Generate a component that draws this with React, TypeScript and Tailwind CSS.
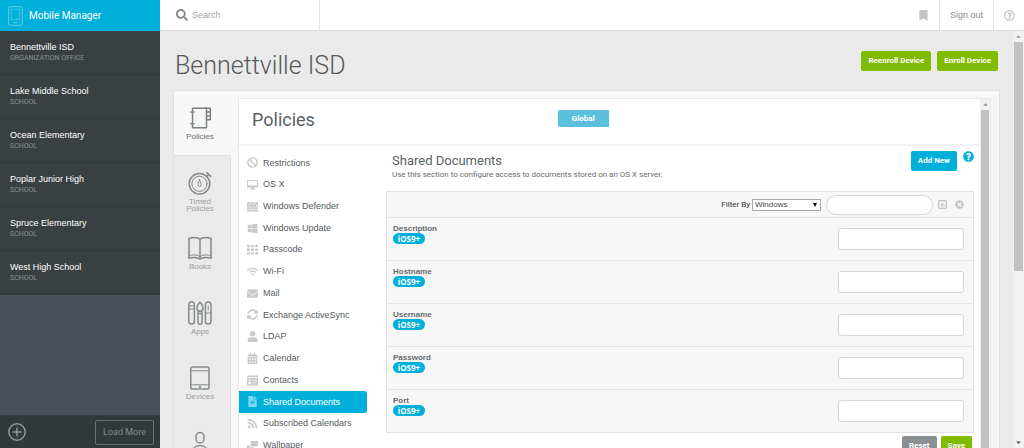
import React from 'react';
import {
  FaSearch,
  FaBookmark,
  FaBan,
  FaWindows,
  FaWifi,
  FaEnvelope,
  FaUser,
  FaFileAlt,
  FaRss,
  FaQuestionCircle,
  FaRegQuestionCircle,
  FaTimesCircle,
  FaSyncAlt,
  FaCalendarAlt,
} from 'react-icons/fa';

interface Organization {
  name: string;
  type: string;
}

interface NavItem {
  label: string;
  icon: React.ReactNode;
}

const organizations: Organization[] = [
  { name: 'Bennettville ISD', type: 'ORGANIZATION OFFICE' },
  { name: 'Lake Middle School', type: 'SCHOOL' },
  { name: 'Ocean Elementary', type: 'SCHOOL' },
  { name: 'Poplar Junior High', type: 'SCHOOL' },
  { name: 'Spruce Elementary', type: 'SCHOOL' },
  { name: 'West High School', type: 'SCHOOL' },
];

const fields = ['Description', 'Hostname', 'Username', 'Password', 'Port'];

const LineIcon: React.FC<{ children: React.ReactNode }> = ({ children }) => (
  <svg
    viewBox="0 0 24 24"
    className="size-6 shrink-0"
    fill="none"
    stroke="currentColor"
    strokeWidth="1.5"
    strokeLinejoin="round"
    strokeLinecap="round"
    aria-hidden="true"
  >
    {children}
  </svg>
);

const GlyphIcon: React.FC<{ children: React.ReactNode }> = ({ children }) => (
  <svg viewBox="0 0 12 12" className="size-[11px]" fill="currentColor" aria-hidden="true">
    {children}
  </svg>
);

const tabs: NavItem[] = [
  {
    label: 'Policies',
    icon: (
      <LineIcon>
        <path d="M4.500 2.200h14v19.600h-14z" />
        <path d="M17 2.200h5.300v11.500h-3.800M18.500 6h3.800M18.500 9.900h3.800" />
        <path d="M2.800 6h3.200M2.800 17.800h3.200" />
      </LineIcon>
    ),
  },
  {
    label: 'Timed Policies',
    icon: (
      <LineIcon>
        <circle cx="11.5" cy="12.8" r="10.3" />
        <circle cx="11.5" cy="12.8" r="7.6" strokeWidth="1" />
        <path d="M11.5 8.6c-.6 2-1.6 3.4-1.6 5a1.6 1.9 0 0 0 3.2 0c0-1.600-1-3-1.600-5z" strokeWidth="1" />
        <path d="M18.800 5.400l2-2M18.800 1.600l4 3.800" />
      </LineIcon>
    ),
  },
  {
    label: 'Books',
    icon: (
      <LineIcon>
        <path d="M12 3.200C9.500 1 4 1 1 2.200v20c3-1 8.500-1 11 .800 2.500-1.800 8-1.800 11-.800v-20C20 1 14.500 1 12 3.200z" />
        <path d="M12 3.200V23" />
        <path d="M1 19.600c3-1 8.500-1 11 .8 2.500-1.800 8-1.800 11-.8" strokeWidth="1" />
      </LineIcon>
    ),
  },
  {
    label: 'Apps',
    icon: (
      <LineIcon>
        <rect x="0.800" y="1" width="5.600" height="22" rx="2.800" />
        <path d="M1 5h5.200M1 8h5.200" strokeWidth="1" />
        <rect x="17.400" y="1" width="5.600" height="22" rx="2.800" />
        <path d="M17.600 12h5.200M20.200 5v4" strokeWidth="1" />
        <path d="M12 1c-1.600 2-3 3.600-3 6a3 3.200 0 0 0 6 0c0-2.400-1.400-4-3-6z" />
        <path d="M10 10.500v10.700a2 2 0 0 0 4 0V10.500M10 12.500h4" />
      </LineIcon>
    ),
  },
  {
    label: 'Devices',
    icon: (
      <LineIcon>
        <rect x="2.800" y="1" width="18.200" height="22" rx="1.800" />
        <path d="M2.800 4.800H21M2.800 18.800H21" strokeWidth="1" />
        <circle cx="12" cy="20.900" r=".4" />
      </LineIcon>
    ),
  },
  {
    label: 'Users',
    icon: (
      <LineIcon>
        <rect x="8" y="1.600" width="8" height="10.400" rx="4" />
        <path d="M4 23c0-5 3-8.400 8-8.400s8 3.400 8 8.400" />
      </LineIcon>
    ),
  },
];

const sections: NavItem[] = [
  { label: 'Restrictions', icon: <FaBan /> },
  {
    label: 'OS X',
    icon: (
      <GlyphIcon>
        <path fillRule="evenodd" d="M0 1h12v8.200H7.500v1.300H9v1H3v-1h1.500V9.200H0zM1.200 2.200v4.800h9.600V2.200z" />
      </GlyphIcon>
    ),
  },
  {
    label: 'Windows Defender',
    icon: (
      <GlyphIcon>
        <path d="M0 1.300h3.700v2.400H0zM4.200 1.300h3.700v2.400H4.200zM8.400 1.300H12v2.400H8.400zM0 4.100h1.900v2.400H0zM2.400 4.100h3.700v2.400H2.400zM6.600 4.100h3.700v2.400H6.600zM10.800 4.100H12v2.400h-1.200zM0 6.900h3.700v2.200H0zM4.200 6.900h3.700v2.200H4.200zM8.400 6.900H12v2.200H8.400zM0 9.500h5.700v2H0zM6.200 9.500H12v2H6.200z" />
      </GlyphIcon>
    ),
  },
  { label: 'Windows Update', icon: <FaWindows /> },
  {
    label: 'Passcode',
    icon: (
      <GlyphIcon>
        <path d="M0 1h3v2.500H0zM4.500 1h3v2.500h-3zM9 1h3v2.500H9zM0 5h3v2.500H0zM4.500 5h3v2.500h-3zM9 5h3v2.500H9zM0 9h3v2.500H0zM4.500 9h3v2.500h-3zM9 9h3v2.500H9z" />
      </GlyphIcon>
    ),
  },
  { label: 'Wi-Fi', icon: <FaWifi /> },
  { label: 'Mail', icon: <FaEnvelope /> },
  { label: 'Exchange ActiveSync', icon: <FaSyncAlt /> },
  { label: 'LDAP', icon: <FaUser /> },
  { label: 'Calendar', icon: <FaCalendarAlt /> },
  {
    label: 'Contacts',
    icon: (
      <GlyphIcon>
        <path
          fillRule="evenodd"
          d="M1 .5h11v2H0v-1zM0 3.200h12v8.300H0zM2 5v1.500h2V5zM1.500 7.300V10h3V7.300zM6.500 5v1h1.500V5zM9 5v1h1.800V5zM6.500 7v1h1.500V7zM9 7v1h1.800V7zM6.500 9v1h1.500V9z"
        />
      </GlyphIcon>
    ),
  },
  { label: 'Shared Documents', icon: <FaFileAlt /> },
  { label: 'Subscribed Calendars', icon: <FaRss /> },
  {
    label: 'Wallpaper',
    icon: (
      <GlyphIcon>
        <path d="M4 1h8v6H4zM0 6h3.200v2H7v3H0z" />
      </GlyphIcon>
    ),
  },
];

const Sidebar: React.FC = () => (
  <aside className="flex w-40 shrink-0 flex-col bg-[#495057]">
    <div className="flex h-[31px] shrink-0 items-center gap-[6px] bg-[#00b0db] px-2 text-white">
      <svg viewBox="0 0 15 20" className="h-5 w-[15px]" fill="none" stroke="#5bcdea" aria-hidden="true">
        <rect x="0.700" y="0.700" width="13.600" height="18.600" rx="1.500" />
        <rect x="3.200" y="3.200" width="8.600" height="10.600" strokeWidth=".6" />
        <path d="M5.500 16.700h4" />
      </svg>
      <span className="font-[Roboto] text-[10px]">Mobile Manager</span>
    </div>
    <ul>
      {organizations.map((org) => (
        <li key={org.name} className="border-b border-[#33393b] bg-[#3a4042]">
          <a href="#" className="flex h-[43px] flex-col justify-center gap-[2px] px-[10px]">
            <span className="text-[9px] leading-[10px] text-white">{org.name}</span>
            <span className="font-[Roboto] text-[7px] leading-[9px] text-[#8d9293]">{org.type}</span>
          </a>
        </li>
      ))}
    </ul>
    <div className="mt-auto flex h-[33px] shrink-0 items-center justify-between border-t border-[#3c4346] bg-[#33393b] pr-[6px] pl-2 text-[#92979a]">
      <button aria-label="Add">
        <svg viewBox="0 0 18 18" className="size-[18px]" fill="none" stroke="currentColor" strokeWidth="1.400">
          <circle cx="9" cy="9" r="8.200" />
          <path d="M9 4.500v9M4.500 9h9" />
        </svg>
      </button>
      <button className="h-[25px] rounded-[2px] border border-[#6b7072] px-[7px] pt-[2px] font-[Roboto] text-[9px] text-[#84898b]">
        Load More
      </button>
    </div>
  </aside>
);

const TopBar: React.FC = () => (
  <header className="flex h-[31px] shrink-0 items-stretch border-b border-[#d9d9d9] bg-white text-[9px] text-[#8c8c8c]">
    <label className="flex w-40 items-center gap-1 border-r border-[#e2e2e2] pl-4">
      <FaSearch className="size-3 shrink-0 text-[#8a8a8a]" />
      <input
        type="search"
        aria-label="Search"
        placeholder="Search"
        className="w-full min-w-0 pt-[2px] outline-none placeholder:text-[#a5a5a5]"
      />
    </label>
    <button aria-label="Bookmarks" className="ml-auto px-[11px] text-[#c4c4c4]">
      <FaBookmark className="h-[11px] w-[9px]" />
    </button>
    <a href="#" className="flex items-center border-x border-[#e2e2e2] px-[10px] pt-[2px]">
      Sign out
    </a>
    <a href="#" aria-label="Help" className="flex w-[30px] items-center justify-center text-[#bcbcbc]">
      <FaRegQuestionCircle className="size-[11px]" />
    </a>
  </header>
);

const TabStrip: React.FC = () => (
  <nav className="w-[57px] shrink-0">
    {tabs.map((tab, index) => (
      <a
        key={tab.label}
        href="#"
        className={
          index === 0
            ? 'flex h-[65px] flex-col items-center gap-[3px] border-b border-[#dedede] pt-[15px] pr-[5px] text-[#7d8283]'
            : 'flex h-[65px] flex-col items-center gap-[3px] border-r border-[#dedede] bg-[#eaeaea] pt-[15px] pr-[4px] text-[#858a8b]'
        }
      >
        {tab.icon}
        <span
          className={
            index === 0
              ? 'w-10 text-center text-[8px] leading-[7px] text-[#6c7173]'
              : 'w-10 text-center text-[8px] leading-[7px] text-[#9a9fa0]'
          }
        >
          {tab.label}
        </span>
      </a>
    ))}
  </nav>
);

const SectionNav: React.FC = () => (
  <nav className="mt-[6px] flex h-[304px] w-32 shrink-0 flex-col text-[9px]">
    {sections.map((section) => {
      const active = section.label === 'Shared Documents';
      return (
        <a
          key={section.label}
          href="#"
          className={
            active
              ? 'flex flex-1 items-center gap-[5px] rounded-r-[3px] bg-[#00b0db] pl-2 text-white'
              : 'flex flex-1 items-center gap-[5px] pl-2 text-[#555a5d]'
          }
        >
          <span
            className={
              active
                ? 'flex w-[11px] shrink-0 justify-center text-[11px] text-[#7fdcf3]'
                : 'flex w-[11px] shrink-0 justify-center text-[11px] text-[#c8c8c8]'
            }
          >
            {section.icon}
          </span>
          <span className="pt-px">{section.label}</span>
        </a>
      );
    })}
  </nav>
);

const FieldRow: React.FC<{ label: string }> = ({ label }) => (
  <div className="flex h-[43px] items-start justify-between border-b border-[#e2e2e2] pr-[9px] pl-[6px]">
    <label htmlFor={label} className="pt-[6px] text-[8px] leading-[9px] font-bold text-[#666b6e]">
      {label}
      <span className="block w-8 rounded-full bg-[#00b0db] text-center font-['Open_Sans'] text-[8px] leading-[11px] text-white">
        iOS9+
      </span>
    </label>
    <input
      id={label}
      type="text"
      className="mt-[10px] h-[22px] w-[126px] rounded-[3px] border border-[#d6d6d6] bg-white px-2 text-[9px]"
    />
  </div>
);

const SharedDocuments: React.FC = () => (
  <section className="ml-[19px] min-w-0 flex-1 pr-[6px]">
    <div className="flex h-[45px] items-start justify-between pt-[5px] pl-[6px]">
      <div className="pt-[2px]">
        <h3 className="font-[Roboto] text-[13px] leading-[15px] text-[#5a5f62]">Shared Documents</h3>
        <p className="pt-[2px] font-[Roboto] text-[8px] leading-[9px] text-[#666b6e]">
          Use this section to configure access to documents stored on an OS X server.
        </p>
      </div>
      <div className="flex items-start gap-[6px]">
        <button className="h-5 rounded-[2px] bg-[#00b0db] px-[7px] font-[Roboto] text-[8px] font-bold text-white">
          Add New
        </button>
        <button aria-label="Help" className="text-[#00b0db]">
          <FaQuestionCircle className="size-[11px]" />
        </button>
      </div>
    </div>
    <div className="border-x border-t border-[#e2e2e2] bg-[#f7f7f7]">
      <div className="flex h-[26px] items-center justify-end border-b border-[#e2e2e2] pr-[9px] text-[8px]">
        <label htmlFor="filter" className="pr-[2px] font-[Roboto] text-[#333]">
          Filter By
        </label>
        <div className="relative">
          <select
            id="filter"
            className="block h-3 w-[69px] appearance-none border border-[#a9a9a9] bg-white pl-[2px] leading-[9px] text-[#444]"
          >
            <option>Windows</option>
          </select>
          <svg
            viewBox="0 0 4 4"
            className="pointer-events-none absolute top-1 right-1 size-1"
            fill="#000"
            aria-hidden="true"
          >
            <path d="M0 0h4L2 4z" />
          </svg>
        </div>
        <input
          type="text"
          aria-label="Filter"
          className="ml-[5px] h-5 w-[107px] rounded-full border border-[#d6d6d6] bg-white px-2"
        />
        <button aria-label="Collapse" className="ml-[5px] text-[#c4c4c4]">
          <svg viewBox="0 0 9 9" className="size-[9px]">
            <rect x=".7" y=".7" width="7.600" height="7.600" rx="1" fill="none" stroke="currentColor" strokeWidth="1.300" />
            <path d="M2.300 5.400L4.500 2.800l2.200 2.600zM2.300 5.900h4.400v.7H2.300z" fill="currentColor" />
          </svg>
        </button>
        <button aria-label="Clear" className="ml-2 text-[#c4c4c4]">
          <FaTimesCircle className="size-[9px]" />
        </button>
      </div>
      {fields.map((field) => (
        <FieldRow key={field} label={field} />
      ))}
    </div>
    <div className="flex justify-end gap-1 pt-[3px] pr-[2px] font-[Roboto] text-[8px] font-bold text-white">
      <button className="h-5 rounded-[2px] bg-[#8a8f91] px-[7px]">Reset</button>
      <button className="h-5 rounded-[2px] bg-[#80bb00] px-[7px]">Save</button>
    </div>
  </section>
);

const Arrow: React.FC<{ down?: boolean }> = ({ down }) => (
  <svg viewBox="0 0 11 11" className="size-[11px] shrink-0" fill={down ? '#505050' : '#8f8f8f'}>
    <path d={down ? 'M3.200 4.500h4.600L5.500 7z' : 'M3.200 6.800h4.600L5.500 4.300z'} />
  </svg>
);

export default function App() {
  return (
    <div className="flex h-screen overflow-hidden bg-[#eaeaea] font-['Liberation_Sans',sans-serif]">
      <Sidebar />
      <div className="flex min-w-0 flex-1 flex-col">
        <TopBar />
        <div className="flex min-h-0 flex-1">
          <main className="flex min-w-0 flex-1 flex-col overflow-hidden px-[13px]">
            <div className="flex h-[59px] shrink-0 items-start justify-between pt-5 pr-[2px] pl-[2px]">
              <h1 className="font-[Roboto] text-[25px] leading-[30px] font-light text-[#555a5d]">Bennettville ISD</h1>
              <div className="flex gap-[6px] font-[Roboto] text-[8px] font-bold text-white">
                <button className="h-5 rounded-[2px] bg-[#80bb00] px-[7px]">Reenroll Device</button>
                <button className="h-5 rounded-[2px] bg-[#80bb00] px-[7px]">Enroll Device</button>
              </div>
            </div>
            <div className="flex min-h-0 flex-1 border border-b-0 border-[#e0e0e0] bg-[#f7f7f7] pr-2">
              <TabStrip />
              <div className="mt-[7px] ml-[7px] flex min-w-0 flex-1 overflow-hidden border border-b-0 border-[#e8e8e8] bg-white">
                <div className="min-w-0 flex-1">
                  <div className="flex h-[47px] items-start border-b-2 border-[#f2f2f2] pt-[11px] pl-[13px]">
                    <h2 className="w-[42%] font-[Roboto] text-[18px] leading-5 text-[#5a5f62]">Policies</h2>
                    <button className="h-[17px] w-[51px] rounded-l-[2px] bg-[#5bc0de] font-[Roboto] text-[8px] font-bold text-white">
                      Global
                    </button>
                  </div>
                  <div className="flex">
                    <SectionNav />
                    <SharedDocuments />
                  </div>
                </div>
                <div className="flex w-[10px] shrink-0 flex-col items-center bg-[#f1f1f1]" aria-hidden="true">
                  <Arrow />
                  <div className="w-2 flex-1 bg-[#c1c1c1]" />
                </div>
              </div>
            </div>
          </main>
          <div className="flex w-[11px] shrink-0 flex-col items-center bg-[#f1f1f1]" aria-hidden="true">
            <Arrow />
            <div className="h-[55%] w-[9px] bg-[#c1c1c1]" />
            <div className="mt-auto">
              <Arrow down />
            </div>
          </div>
        </div>
      </div>
    </div>
  );
}
